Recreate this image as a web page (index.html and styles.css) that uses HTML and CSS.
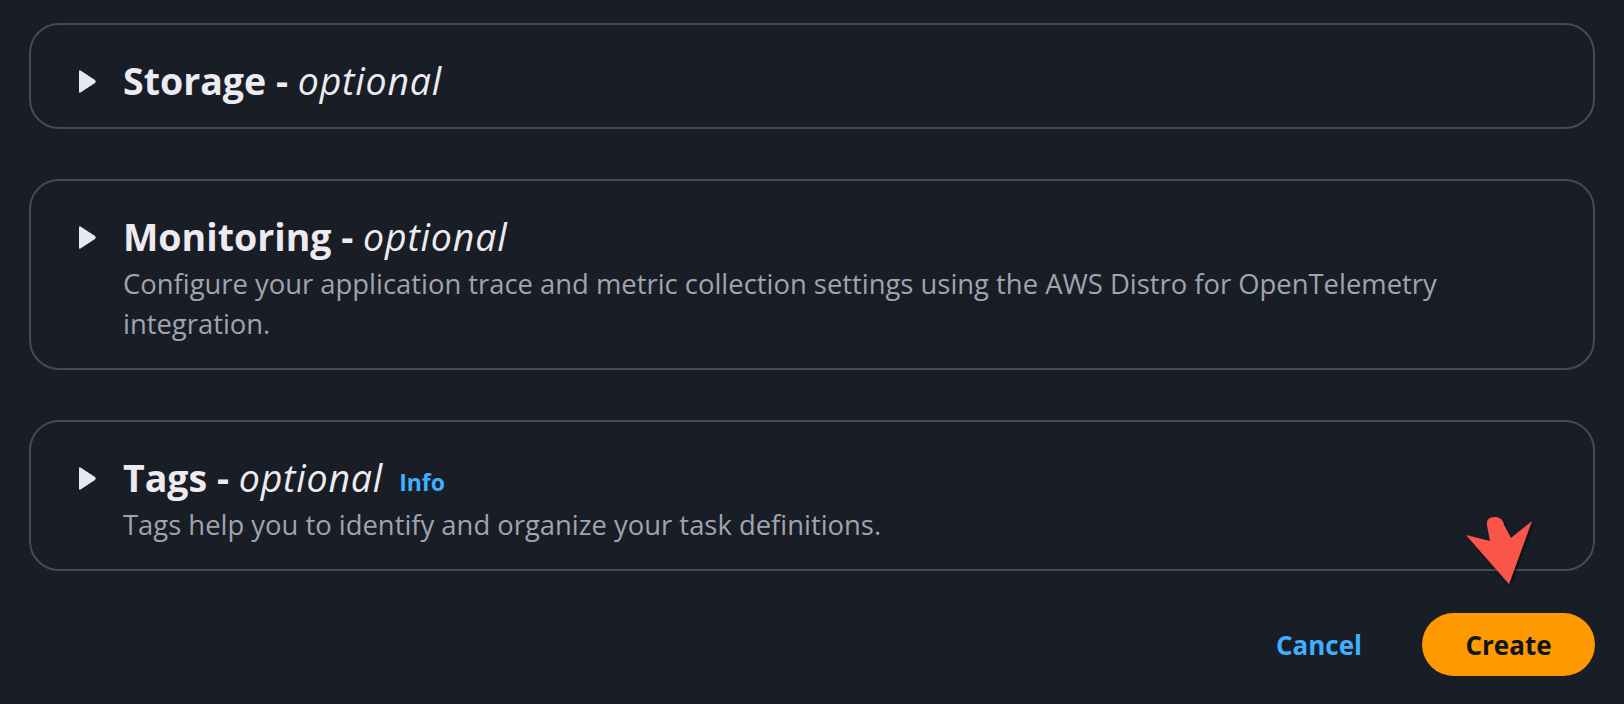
FILE: index.html
```html
<!DOCTYPE html>
<html lang="en">
<head>
<meta charset="utf-8">
<title>Task definition</title>
<link rel="stylesheet" href="styles.css">
</head>
<body>
<main class="page">
  <section class="card">
    <div class="card-head">
      <svg class="caret" viewBox="0 0 19 25" aria-hidden="true"><path d="M2.5 1.5 L17 11 Q18.6 12.5 17 14 L2.5 23.5 Q1 24.3 1 22.5 L1 2.5 Q1 0.7 2.5 1.5 Z" fill="currentColor"/></svg>
      <h2 class="title">Storage - <i class="opt">optional</i></h2>
    </div>
  </section>

  <section class="card">
    <div class="card-head">
      <svg class="caret" viewBox="0 0 19 25" aria-hidden="true"><path d="M2.5 1.5 L17 11 Q18.6 12.5 17 14 L2.5 23.5 Q1 24.3 1 22.5 L1 2.5 Q1 0.7 2.5 1.5 Z" fill="currentColor"/></svg>
      <h2 class="title">Monitoring - <i class="opt">optional</i></h2>
    </div>
    <p class="desc">Configure your application trace and metric collection settings using the AWS Distro for OpenTelemetry integration.</p>
  </section>

  <section class="card">
    <div class="card-head">
      <svg class="caret" viewBox="0 0 19 25" aria-hidden="true"><path d="M2.5 1.5 L17 11 Q18.6 12.5 17 14 L2.5 23.5 Q1 24.3 1 22.5 L1 2.5 Q1 0.7 2.5 1.5 Z" fill="currentColor"/></svg>
      <h2 class="title">Tags - <i class="opt">optional</i></h2>
      <a class="info" href="#">Info</a>
    </div>
    <p class="desc">Tags help you to identify and organize your task definitions.</p>
  </section>

  <div class="actions">
    <button class="btn-link" type="button">Cancel</button>
    <button class="btn-primary" type="button">Create</button>
  </div>

  <svg class="pointer" viewBox="0 0 80 80" aria-hidden="true">
    <defs>
      <filter id="sh" x="-20%" y="-20%" width="150%" height="150%">
        <feDropShadow dx="1.5" dy="2" stdDeviation="1.5" flood-color="#000" flood-opacity="0.55"/>
      </filter>
    </defs>
    <path filter="url(#sh)" fill="#f9574a" d="M45 68 L2 19 L26 25 L23 9 Q22 0 32 1 Q39 2 40 9 L47 22 L68 5 Z"/>
  </svg>
</main>
</body>
</html>
```

FILE: styles.css
```css
* { box-sizing: border-box; }

html, body {
  margin: 0;
  padding: 0;
  background: #181d26;
}

body {
  font-family: "Open Sans", "Noto Sans", "Liberation Sans", sans-serif;
  color: #e9e8ef;
}

.page {
  position: relative;
  width: 1624px;
  height: 704px;
  padding: 23px 29px 0 29px;
  display: flex;
  flex-direction: column;
  gap: 50px;
}

.card {
  border: 2px solid #454a55;
  border-radius: 30px;
  padding: 34px 24px 24px 47px;
}

.card-head {
  display: flex;
  align-items: center;
  height: 44px;
}

.caret {
  width: 19px;
  height: 25px;
  color: #e9e8ef;
  flex: none;
  margin-right: 26px;
}

.title {
  margin: 0;
  font-size: 37.5px;
  line-height: 44px;
  font-weight: 700;
  color: #ecebf1;
  white-space: nowrap;
}

.opt {
  font-style: italic;
  font-weight: 500;
  letter-spacing: 0.8px;
}

.info {
  margin-left: 16px;
  margin-top: 8px;
  font-size: 23px;
  font-weight: 700;
  color: #3fb0ff;
  text-decoration: none;
}

.desc {
  margin: 5px 0 0 45px;
  font-size: 27.4px;
  line-height: 40px;
  color: #a0a4ae;
  max-width: 1380px;
}

.actions {
  display: flex;
  justify-content: flex-end;
  align-items: center;
  margin-top: -8px;
  gap: 60px;
}

.btn-link {
  background: none;
  border: none;
  padding: 0;
  font-family: inherit;
  font-size: 26px;
  font-weight: 700;
  color: #3fb0ff;
}

.btn-primary {
  width: 173px;
  height: 63px;
  border: none;
  border-radius: 32px;
  background: #ff9900;
  font-family: inherit;
  font-size: 26px;
  font-weight: 700;
  color: #0f141a;
}

.pointer {
  position: absolute;
  left: 1464px;
  top: 516px;
  width: 80px;
  height: 80px;
}
```
